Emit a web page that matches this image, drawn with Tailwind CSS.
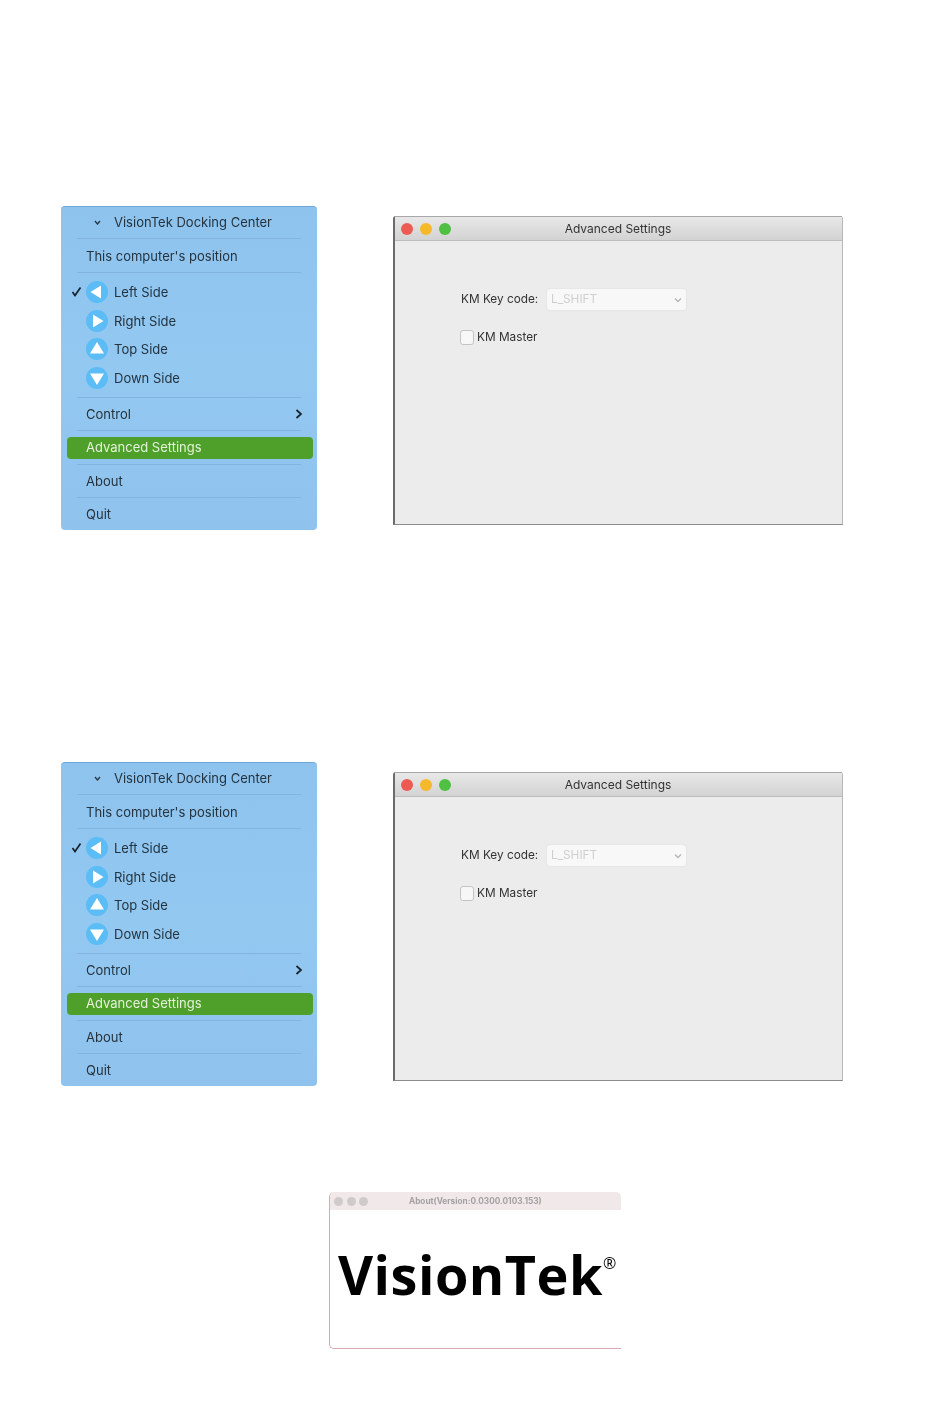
<!DOCTYPE html>
<html lang="en">
<head>
    <meta charset="UTF-8">
    <meta name="viewport" content="width=device-width, initial-scale=1.0">
    <title>VisionTek Docking Center - Advanced Settings</title>
    <script src="https://cdn.jsdelivr.net/npm/@tailwindcss/browser@4"></script>
</head>
<body class="bg-white font-['Inter',sans-serif] overflow-hidden">
<main class="w-[950px] h-[1408px] pt-[206px] blur-[0.5px]">

    <!-- Advanced settings, first shot -->
    <section class="flex items-start pl-[61px]">
        <div class="w-[256px] h-[324px] rounded-[4px] bg-gradient-to-b from-[#8ec3ee] via-[#93c8f1] to-[#8fc3ee] border-t border-[#6fa6d8] text-[13px] leading-none text-[#25333e]">
            <div class="h-[32px] mx-[16px] border-b border-[#82b4de] flex items-center">
                <svg class="ml-[17px] w-[7px] h-[5px]" viewBox="0 0 7 5"><path d="M1 1l2.5 3L6 1" fill="none" stroke="#2b3a46" stroke-width="1.4"/></svg>
                <span class="ml-[13px] whitespace-nowrap">VisionTek Docking Center</span>
            </div>
            <div class="h-[34px] mx-[16px] border-b border-[#82b4de] flex items-center pl-[9px] pt-[1px]">This computer's position</div>
            <div class="h-[125px] mx-[16px] border-b border-[#82b4de] pt-[5px] relative">
                <svg class="absolute left-[-6px] top-[13px] w-[11px] h-[11px]" viewBox="0 0 11 11"><path d="M1.5 6l2.5 3.5L9.5 1.5" fill="none" stroke="#16222c" stroke-width="1.7"/></svg>
                <div class="h-[28.5px] flex items-center pl-[10px]">
                    <svg class="w-[22px] h-[22px] shrink-0 ml-[-1px]" viewBox="0 0 22 22"><circle cx="11" cy="11" r="11" fill="#5bbcf6"/><path d="M4.5 11L15 4.5v13z" fill="#fff"/></svg>
                    <span class="ml-[6px]">Left Side</span>
                </div>
                <div class="h-[28.5px] flex items-center pl-[10px] pt-[1px]">
                    <svg class="w-[22px] h-[22px] shrink-0 ml-[-1px]" viewBox="0 0 22 22"><circle cx="11" cy="11" r="11" fill="#5bbcf6"/><path d="M17.5 11L7 4.5v13z" fill="#fff"/></svg>
                    <span class="ml-[6px]">Right Side</span>
                </div>
                <div class="h-[28.5px] flex items-center pl-[10px]">
                    <svg class="w-[22px] h-[22px] shrink-0 ml-[-1px]" viewBox="0 0 22 22"><circle cx="11" cy="11" r="11" fill="#5bbcf6"/><path d="M11 4L4 15.5h14z" fill="#fff"/></svg>
                    <span class="ml-[6px]">Top Side</span>
                </div>
                <div class="h-[28.5px] flex items-center pl-[10px] pt-[1px]">
                    <svg class="w-[22px] h-[22px] shrink-0 ml-[-1px]" viewBox="0 0 22 22"><circle cx="11" cy="11" r="11" fill="#5bbcf6"/><path d="M11 18L4 6.5h14z" fill="#fff"/></svg>
                    <span class="ml-[6px]">Down Side</span>
                </div>
            </div>
            <div class="h-[33px] mx-[16px] border-b border-[#82b4de] flex items-center justify-between pl-[9px]">
                <span>Control</span>
                <svg class="w-[8px] h-[10px] mr-[-2px]" viewBox="0 0 8 10"><path d="M1.5 1l4.5 4-4.5 4" fill="none" stroke="#16222c" stroke-width="1.7"/></svg>
            </div>
            <div class="h-[34px] mx-[16px] border-b border-[#82b4de] flex items-center">
                <div class="w-[246px] h-[22px] ml-[-10px] shrink-0 rounded-[4px] bg-[#4ea02b] text-[#e4f2da] flex items-center pl-[19px]">Advanced Settings</div>
            </div>
            <div class="h-[33px] mx-[16px] border-b border-[#82b4de] flex items-center pl-[9px]">About</div>
            <div class="h-[32px] mx-[16px] flex items-center pl-[9px]">Quit</div>
        </div>

        <div class="ml-[76px] mt-[10px] w-[450px] h-[309px] bg-[#ececec] border-l-2 border-b border-r border-l-[#6b6b6b] border-b-[#8a8a8a] border-r-[#b8b8b8] rounded-t-[3px] text-[11.8px] leading-none text-[#333333]">
            <div class="h-[25px] bg-gradient-to-b from-[#e8e8e8] to-[#d3d3d3] border-t border-b border-t-[#a8a8a8] border-b-[#bdbdbd] flex items-center relative">
                <span class="ml-[6px] w-[12px] h-[12px] rounded-full bg-[#ee5a52]"></span>
                <span class="ml-[7px] w-[12px] h-[12px] rounded-full bg-[#f6b92b]"></span>
                <span class="ml-[7px] w-[12px] h-[12px] rounded-full bg-[#4fc041]"></span>
                <span class="absolute inset-x-0 text-center text-[12px] pr-[1px] pt-[1px]">Advanced Settings</span>
            </div>
            <div class="pl-[66px] pt-[48px]">
                <div class="flex items-center h-[21px]">
                    <span class="w-[86px]">KM Key code:</span>
                    <div class="w-[139px] h-[21px] bg-[#f8f8f8] rounded-[3px] flex items-center justify-between px-[4px] text-[#cfcfcf] shadow-[0_0_2px_#d8d8d8]">
                        <span>L_SHIFT</span>
                        <svg class="w-[8px] h-[6px]" viewBox="0 0 8 6"><path d="M1 1.5l3 3 3-3" fill="none" stroke="#b5b5b5" stroke-width="1.3"/></svg>
                    </div>
                </div>
                <div class="flex items-center mt-[20px] -ml-[1px]">
                    <span class="w-[14px] h-[15px] bg-[#f7f7f7] border border-[#c4c4c4] rounded-[3px]"></span>
                    <span class="ml-[3px]">KM Master</span>
                </div>
            </div>
        </div>
    </section>

    <!-- Advanced settings, second shot -->
    <section class="flex items-start pl-[61px] mt-[232px]">
        <div class="w-[256px] h-[324px] rounded-[4px] bg-gradient-to-b from-[#8ec3ee] via-[#93c8f1] to-[#8fc3ee] border-t border-[#6fa6d8] text-[13px] leading-none text-[#25333e]">
            <div class="h-[32px] mx-[16px] border-b border-[#82b4de] flex items-center">
                <svg class="ml-[17px] w-[7px] h-[5px]" viewBox="0 0 7 5"><path d="M1 1l2.5 3L6 1" fill="none" stroke="#2b3a46" stroke-width="1.4"/></svg>
                <span class="ml-[13px] whitespace-nowrap">VisionTek Docking Center</span>
            </div>
            <div class="h-[34px] mx-[16px] border-b border-[#82b4de] flex items-center pl-[9px] pt-[1px]">This computer's position</div>
            <div class="h-[125px] mx-[16px] border-b border-[#82b4de] pt-[5px] relative">
                <svg class="absolute left-[-6px] top-[13px] w-[11px] h-[11px]" viewBox="0 0 11 11"><path d="M1.5 6l2.5 3.5L9.5 1.5" fill="none" stroke="#16222c" stroke-width="1.7"/></svg>
                <div class="h-[28.5px] flex items-center pl-[10px]">
                    <svg class="w-[22px] h-[22px] shrink-0 ml-[-1px]" viewBox="0 0 22 22"><circle cx="11" cy="11" r="11" fill="#5bbcf6"/><path d="M4.5 11L15 4.5v13z" fill="#fff"/></svg>
                    <span class="ml-[6px]">Left Side</span>
                </div>
                <div class="h-[28.5px] flex items-center pl-[10px] pt-[1px]">
                    <svg class="w-[22px] h-[22px] shrink-0 ml-[-1px]" viewBox="0 0 22 22"><circle cx="11" cy="11" r="11" fill="#5bbcf6"/><path d="M17.5 11L7 4.5v13z" fill="#fff"/></svg>
                    <span class="ml-[6px]">Right Side</span>
                </div>
                <div class="h-[28.5px] flex items-center pl-[10px]">
                    <svg class="w-[22px] h-[22px] shrink-0 ml-[-1px]" viewBox="0 0 22 22"><circle cx="11" cy="11" r="11" fill="#5bbcf6"/><path d="M11 4L4 15.5h14z" fill="#fff"/></svg>
                    <span class="ml-[6px]">Top Side</span>
                </div>
                <div class="h-[28.5px] flex items-center pl-[10px] pt-[1px]">
                    <svg class="w-[22px] h-[22px] shrink-0 ml-[-1px]" viewBox="0 0 22 22"><circle cx="11" cy="11" r="11" fill="#5bbcf6"/><path d="M11 18L4 6.5h14z" fill="#fff"/></svg>
                    <span class="ml-[6px]">Down Side</span>
                </div>
            </div>
            <div class="h-[33px] mx-[16px] border-b border-[#82b4de] flex items-center justify-between pl-[9px]">
                <span>Control</span>
                <svg class="w-[8px] h-[10px] mr-[-2px]" viewBox="0 0 8 10"><path d="M1.5 1l4.5 4-4.5 4" fill="none" stroke="#16222c" stroke-width="1.7"/></svg>
            </div>
            <div class="h-[34px] mx-[16px] border-b border-[#82b4de] flex items-center">
                <div class="w-[246px] h-[22px] ml-[-10px] shrink-0 rounded-[4px] bg-[#4ea02b] text-[#e4f2da] flex items-center pl-[19px]">Advanced Settings</div>
            </div>
            <div class="h-[33px] mx-[16px] border-b border-[#82b4de] flex items-center pl-[9px]">About</div>
            <div class="h-[32px] mx-[16px] flex items-center pl-[9px]">Quit</div>
        </div>

        <div class="ml-[76px] mt-[10px] w-[450px] h-[309px] bg-[#ececec] border-l-2 border-b border-r border-l-[#6b6b6b] border-b-[#8a8a8a] border-r-[#b8b8b8] rounded-t-[3px] text-[11.8px] leading-none text-[#333333]">
            <div class="h-[25px] bg-gradient-to-b from-[#e8e8e8] to-[#d3d3d3] border-t border-b border-t-[#a8a8a8] border-b-[#bdbdbd] flex items-center relative">
                <span class="ml-[6px] w-[12px] h-[12px] rounded-full bg-[#ee5a52]"></span>
                <span class="ml-[7px] w-[12px] h-[12px] rounded-full bg-[#f6b92b]"></span>
                <span class="ml-[7px] w-[12px] h-[12px] rounded-full bg-[#4fc041]"></span>
                <span class="absolute inset-x-0 text-center text-[12px] pr-[1px] pt-[1px]">Advanced Settings</span>
            </div>
            <div class="pl-[66px] pt-[48px]">
                <div class="flex items-center h-[21px]">
                    <span class="w-[86px]">KM Key code:</span>
                    <div class="w-[139px] h-[21px] bg-[#f8f8f8] rounded-[3px] flex items-center justify-between px-[4px] text-[#cfcfcf] shadow-[0_0_2px_#d8d8d8]">
                        <span>L_SHIFT</span>
                        <svg class="w-[8px] h-[6px]" viewBox="0 0 8 6"><path d="M1 1.5l3 3 3-3" fill="none" stroke="#b5b5b5" stroke-width="1.3"/></svg>
                    </div>
                </div>
                <div class="flex items-center mt-[20px] -ml-[1px]">
                    <span class="w-[14px] h-[15px] bg-[#f7f7f7] border border-[#c4c4c4] rounded-[3px]"></span>
                    <span class="ml-[3px]">KM Master</span>
                </div>
            </div>
        </div>
    </section>

    <!-- About window -->
    <section class="ml-[329px] mt-[106px] w-[292px] h-[157px] border-l border-b border-[#d8a9b0] rounded-[5px] rounded-r-none">
        <div class="h-[18px] bg-[#f1e8ea] rounded-t-[5px] flex items-center relative">
            <span class="ml-[4px] w-[9px] h-[9px] rounded-full bg-[#cfcbcc]"></span>
            <span class="ml-[4px] w-[9px] h-[9px] rounded-full bg-[#cfcbcc]"></span>
            <span class="ml-[3px] w-[9px] h-[9px] rounded-full bg-[#cfcbcc]"></span>
            <span class="absolute left-[79px] text-[8.25px] font-bold text-[#a3a0a1] whitespace-nowrap">About(Version:0.0300.0103.153)</span>
        </div>
        <div class="flex items-start pl-[8px] pt-[37px] font-['Open_Sans',sans-serif] text-black">
            <span class="text-[54px] leading-[54px] font-bold tracking-[0.5px]">VisionTek</span>
            <span class="text-[16px] leading-none mt-[8px] font-normal">®</span>
        </div>
    </section>
</main>
</body>
</html>
